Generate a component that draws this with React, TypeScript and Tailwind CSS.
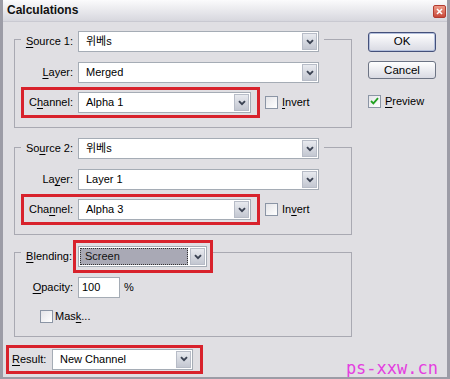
import React from "react";

const bg = "bg-[#e0dfe3]";

const Chevron = () => (
  <svg width="8" height="6" viewBox="0 0 8 6">
    <path d="M1 1.2 L4 4.2 L7 1.2" fill="none" stroke="#3a4252" strokeWidth="1.9" />
  </svg>
);

type SelectProps = {
  value: string;
  width: string;
  focused?: boolean;
};

const Select: React.FC<SelectProps> = ({ value, width, focused }) => (
  <div className={`${width} flex h-[21px] border border-[#a5acb5] bg-white`}>
    <div className="flex flex-1 items-center p-[1px]">
      {focused ? (
        <div className="flex h-full flex-1 items-center border border-dotted border-[#333] bg-[#a9a9b5] pl-[4px] text-[#111]">
          {value}
        </div>
      ) : (
        <span className="pl-[6px]">{value}</span>
      )}
    </div>
    <div className="m-[1px] flex w-[15px] items-center justify-center border border-[#b7bcc7] bg-gradient-to-b from-[#e8eaef] to-[#c3c7d1]">
      <Chevron />
    </div>
  </div>
);

const Check: React.FC<{ checked?: boolean }> = ({ checked }) => (
  <div className="flex h-[13px] w-[13px] items-center justify-center border border-[#8b95a5] bg-gradient-to-br from-[#e4e4e8] to-white">
    {checked && (
      <svg width="9" height="8" viewBox="0 0 9 8">
        <path d="M1 4 L3.4 6.4 L8 1.2" fill="none" stroke="#21a121" strokeWidth="1.8" />
      </svg>
    )}
  </div>
);

// label with an underlined access key
const Key: React.FC<{ before?: string; k: string; after?: string }> = ({ before = "", k, after = "" }) => (
  <>
    {before}
    <span className="underline underline-offset-2">{k}</span>
    {after}
  </>
);

const red = "border-[3px] border-[#d8222c]";

export default function App() {
  return (
    <div
      className={`relative h-[379px] w-[450px] overflow-hidden ${bg} border-x-[3px] border-b-[2px] border-[#9c9ca6] font-['Liberation_Sans','Noto_Sans_CJK_KR',sans-serif] text-[11px] text-black`}
    >
      {/* Title bar */}
      <div className="flex h-[22px] justify-between border-b border-[#c9c9d1] bg-gradient-to-b from-[#fbfbfc] to-[#d7d7de]">
        <span className="pl-[4px] text-[12px] font-bold leading-[20px] text-[#111]">Calculations</span>
        <div className="mr-[1px] mt-[5px] flex h-[13px] w-[13px] items-center justify-center rounded-[2px] border border-[#b23b30] bg-gradient-to-b from-[#ee9a88] to-[#c7473a]">
          <svg width="7" height="7" viewBox="0 0 7 7">
            <path d="M1 1 L6 6 M6 1 L1 6" stroke="white" strokeWidth="1.6" />
          </svg>
        </div>
      </div>

      <div className="flex">
        {/* Left column */}
        <div className="flex w-[350px] flex-col">
          {/* Source 1 */}
          <div className="ml-[11px] mt-[17px] w-[338px] border border-[#a9a9b2] pb-[9px]">
            <div className={`-mt-[9px] ml-[6px] flex w-fit items-center pr-[5px] ${bg}`}>
              <span className="w-[52px] text-right"><Key k="S" after="ource 1:" /></span>
              <div className="ml-[5px]"><Select value="위베s" width="w-[241px]" /></div>
            </div>
            <div className="mt-[10px] flex items-center">
              <span className="w-[58px] text-right"><Key k="L" after="ayer:" /></span>
              <div className="ml-[5px]"><Select value="Merged" width="w-[241px]" /></div>
            </div>
            <div className="mt-[4px] flex items-center">
              <div className={`ml-[6px] flex items-center py-[2px] pr-[6px] ${red}`}>
                <span className="w-[49px] text-right"><Key before="C" k="h" after="annel:" /></span>
                <div className="ml-[5px]"><Select value="Alpha 1" width="w-[173px]" /></div>
              </div>
              <div className="ml-[5px]"><Check /></div>
              <span className="ml-[4px]"><Key k="I" after="nvert" /></span>
            </div>
          </div>

          {/* Source 2 */}
          <div className="ml-[11px] mt-[19px] w-[338px] border border-[#a9a9b2] pb-[9px]">
            <div className={`-mt-[10px] ml-[6px] flex w-fit items-center pr-[5px] ${bg}`}>
              <span className="w-[52px] text-right"><Key before="So" k="u" after="rce 2:" /></span>
              <div className="ml-[5px]"><Select value="위베s" width="w-[241px]" /></div>
            </div>
            <div className="mt-[10px] flex items-center">
              <span className="w-[58px] text-right"><Key before="La" k="y" after="er:" /></span>
              <div className="ml-[5px]"><Select value="Layer 1" width="w-[241px]" /></div>
            </div>
            <div className="mt-[4px] flex items-center">
              <div className={`ml-[6px] flex items-center py-[2px] pr-[6px] ${red}`}>
                <span className="w-[49px] text-right"><Key before="Cha" k="n" after="nel:" /></span>
                <div className="ml-[5px]"><Select value="Alpha 3" width="w-[173px]" /></div>
              </div>
              <div className="ml-[5px]"><Check /></div>
              <span className="ml-[4px]"><Key before="In" k="v" after="ert" /></span>
            </div>
          </div>

          {/* Blending */}
          <div className="ml-[11px] mt-[17px] w-[338px] border border-[#a9a9b2] pb-[11px]">
            <div className={`-mt-[13px] ml-[6px] flex w-fit items-center ${bg}`}>
              <span className="w-[52px] pr-[1px] text-right"><Key k="B" after="lending:" /></span>
              <div className={`py-[3px] pl-[2px] pr-[3px] ${red}`}>
                <Select value="Screen" width="w-[129px]" focused />
              </div>
            </div>
            <div className="mt-[4px] flex items-center">
              <span className="w-[58px] text-right"><Key k="O" after="pacity:" /></span>
              <div className="ml-[5px] flex h-[21px] w-[42px] items-center border border-[#a5acb5] bg-white pl-[3px]">100</div>
              <span className="ml-[4px]">%</span>
            </div>
            <div className="ml-[25px] mt-[10px] flex items-center">
              <Check />
              <span className="ml-[2px]"><Key before="Mas" k="k" after="..." /></span>
            </div>
          </div>

          {/* Result */}
          <div className={`ml-[3px] mt-[8px] flex w-fit items-center py-[1px] pr-[7px] ${red}`}>
            <span className="w-[43px] pl-[3px]"><Key k="R" after="esult:" /></span>
            <Select value="New Channel" width="w-[141px]" />
          </div>
        </div>

        {/* Right column */}
        <div className="ml-[15px] flex w-[68px] flex-col">
          <button className="mt-[10px] h-[20px] rounded-[3px] border border-[#44507a] bg-gradient-to-b from-white to-[#d9dae3] text-[11.5px] shadow-[inset_0_0_0_1px_#b3bfdc]">
            OK
          </button>
          <button className="mt-[9px] h-[18px] rounded-[3px] border border-[#6d7484] bg-gradient-to-b from-white to-[#d9dae3] text-[11.5px]">
            Cancel
          </button>
          <div className="mt-[14px] flex items-center">
            <Check checked />
            <span className="ml-[4px]"><Key k="P" after="review" /></span>
          </div>
        </div>
      </div>

      {/* watermark */}
      <span className="absolute bottom-[0px] right-[9px] font-['DejaVu_Sans_Mono',monospace] text-[17px] leading-none text-[#e43ee0]">
        ps-xxw.cn
      </span>
    </div>
  );
}
